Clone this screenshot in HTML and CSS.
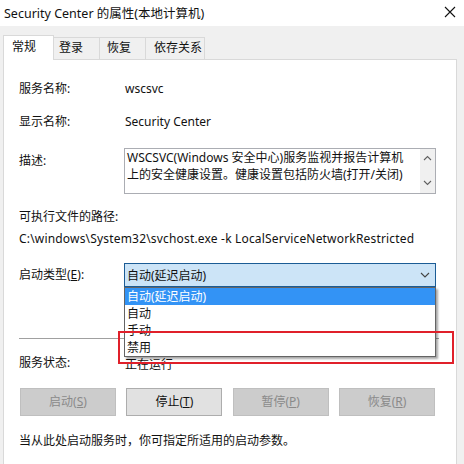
FILE: index.html
```html
<!DOCTYPE html>
<html>
<head>
<meta charset="utf-8">
<link rel="stylesheet" href="styles.css">
</head>
<body>
<div class="titlebar">
  <span class="title">Security Center 的属性(本地计算机)</span>
  <svg class="close" width="12" height="12" viewBox="0 0 12 12"><path d="M1 1 L11 11 M11 1 L1 11" stroke="#111" stroke-width="1.1" fill="none"/></svg>
</div>
<div class="tabs">
  <div class="tab selected t1">常规</div>
  <div class="tab t2">登录</div>
  <div class="tab t3">恢复</div>
  <div class="tab t4">依存关系</div>
</div>
<div class="panel">
  <div class="row r1"><div class="label">服务名称:</div><div class="value">wscsvc</div></div>
  <div class="row r2"><div class="label">显示名称:</div><div class="value">Security Center</div></div>
  <div class="row r3">
    <div class="label desc-label">描述:</div>
    <div class="descbox">
      <div class="desctext">WSCSVC(Windows 安全中心)服务监视并报告计算机<br>上的安全健康设置。健康设置包括防火墙(打开/关闭)</div>
      <div class="vscroll">
        <svg width="9" height="6" viewBox="0 0 9 6"><path d="M1 5 L4.5 1.5 L8 5" stroke="#606060" stroke-width="1.1" fill="none"/></svg>
        <svg width="9" height="6" viewBox="0 0 9 6"><path d="M1 1 L4.5 4.5 L8 1" stroke="#606060" stroke-width="1.1" fill="none"/></svg>
      </div>
    </div>
  </div>
  <div class="line r4">可执行文件的路径:</div>
  <div class="line r5 path">C:\windows\System32\svchost.exe -k LocalServiceNetworkRestricted</div>
  <div class="row r6">
    <div class="label combo-label">启动类型(<u>E</u>):</div>
    <div class="combo">
      <span>自动(延迟启动)</span>
      <svg width="10" height="6" viewBox="0 0 10 6"><path d="M1 1 L5 5 L9 1" stroke="#444" stroke-width="1.1" fill="none"/></svg>
    </div>
  </div>
  <div class="separator"></div>
  <div class="row r7"><div class="label">服务状态:</div><div class="value status">正在运行</div></div>
  <div class="buttons">
    <div class="btn disabled">启动(<u>S</u>)</div>
    <div class="btn">停止(<u>T</u>)</div>
    <div class="btn disabled">暂停(<u>P</u>)</div>
    <div class="btn disabled">恢复(<u>R</u>)</div>
  </div>
  <div class="line note">当从此处启动服务时，你可指定所适用的启动参数。</div>

  <div class="dropdown">
    <div class="opt active">自动(延迟启动)</div>
    <div class="opt">自动</div>
    <div class="opt">手动</div>
    <div class="opt">禁用</div>
  </div>
  <div class="redbox"></div>
</div>
</body>
</html>
```

FILE: styles.css
```css
* { box-sizing: border-box; }
html, body { margin: 0; padding: 0; }
body {
  width: 464px;
  height: 464px;
  overflow: hidden;
  background: #f0f0f0;
  font-family: "Noto Sans", "Noto Sans CJK SC", sans-serif;
  font-size: 12px;
  color: #111;
}
u { text-decoration: underline; text-underline-offset: 1px; }

.titlebar {
  height: 26px;
  background: #fff;
  display: flex;
  align-items: center;
  justify-content: space-between;
  padding: 0 8px 2px 4px;
}
.title { font-size: 12.5px; color: #111; }

.tabs {
  display: flex;
  align-items: flex-end;
  height: 33px;
  padding-left: 3px;
}
.tab {
  height: 22px;
  line-height: 20px;
  border: 1px solid #d9d9d9;
  border-bottom: none;
  background: #f0f0f0;
  margin-left: -1px;
  padding-left: 6px;
}
.tab.selected {
  height: 25px;
  line-height: 22px;
  background: #fff;
  margin-left: 0;
  margin-bottom: -1px;
  position: relative;
  z-index: 1;
  padding-left: 8px;
}
.t1 { width: 51px; }
.t2 { width: 47px; padding-left: 5px; }
.t3 { width: 47px; padding-left: 7px; }
.t4 { width: 60px; padding-left: 8px; }

.panel {
  position: relative;
  margin-left: 3px;
  width: 454px;
  height: 420px;
  background: #fff;
  border: 1px solid #d9d9d9;
  padding: 19px 0 0 15px;
}

.row { display: flex; }
.label { width: 105px; flex: none; line-height: 20px; }
.value { line-height: 20px; padding-left: 1px; }
.line { line-height: 20px; }
.path { letter-spacing: 0.18px; }

.r2 { margin-top: 13px; }
.r3 { margin-top: 16px; }
.desc-label { padding-top: 3px; }
.descbox {
  width: 312px;
  height: 46px;
  border: 1px solid #abadb3;
  display: flex;
}
.desctext {
  flex: 1;
  line-height: 17px;
  padding: 0 0 0 2px;
  overflow: hidden;
  white-space: nowrap;
}
.vscroll {
  width: 15px;
  flex: none;
  background: #f0f0f0;
  display: flex;
  flex-direction: column;
  justify-content: space-between;
  align-items: center;
  padding: 6px 0 7px;
}
.vscroll svg { display: block; }

.r4 { margin-top: 13px; }
.r5 { margin-top: 2px; }
.r6 { margin-top: 14px; }
.combo-label { line-height: 23px; }
.combo {
  width: 312px;
  height: 24px;
  background: #cce4f7;
  border: 1px solid #1b5c95;
  display: flex;
  align-items: center;
  justify-content: space-between;
  padding: 0 5px 0 2px;
}

.separator {
  margin-top: 51px;
  height: 1px;
  width: 420px;
  background: #a0a0a0;
}
.r7 { margin-top: 14px; }
.status { padding-top: 2px; }

.buttons {
  margin-top: 13px;
  width: 416px;
  display: flex;
  justify-content: space-between;
  padding-left: 1px;
}
.btn {
  width: 96px;
  height: 28px;
  line-height: 26px;
  text-align: center;
  background: #e1e1e1;
  border: 1px solid #adadad;
}
.btn.disabled {
  background: #cccccc;
  border-color: #bfbfbf;
  color: #8a8a8a;
}
.note { margin-top: 15px; }

.dropdown {
  position: absolute;
  left: 120px;
  top: 227px;
  width: 312px;
  background: #fff;
  border: 1px solid #646464;
  box-shadow: 2px 2px 2px rgba(0,0,0,0.35);
}
.opt {
  height: 17px;
  line-height: 17px;
  padding-left: 2px;
}
.opt.active { background: #3393f5; color: #fff; }

.redbox {
  position: absolute;
  left: 114px;
  top: 271px;
  width: 336px;
  height: 33px;
  border: 2px solid #e0202a;
}
```
